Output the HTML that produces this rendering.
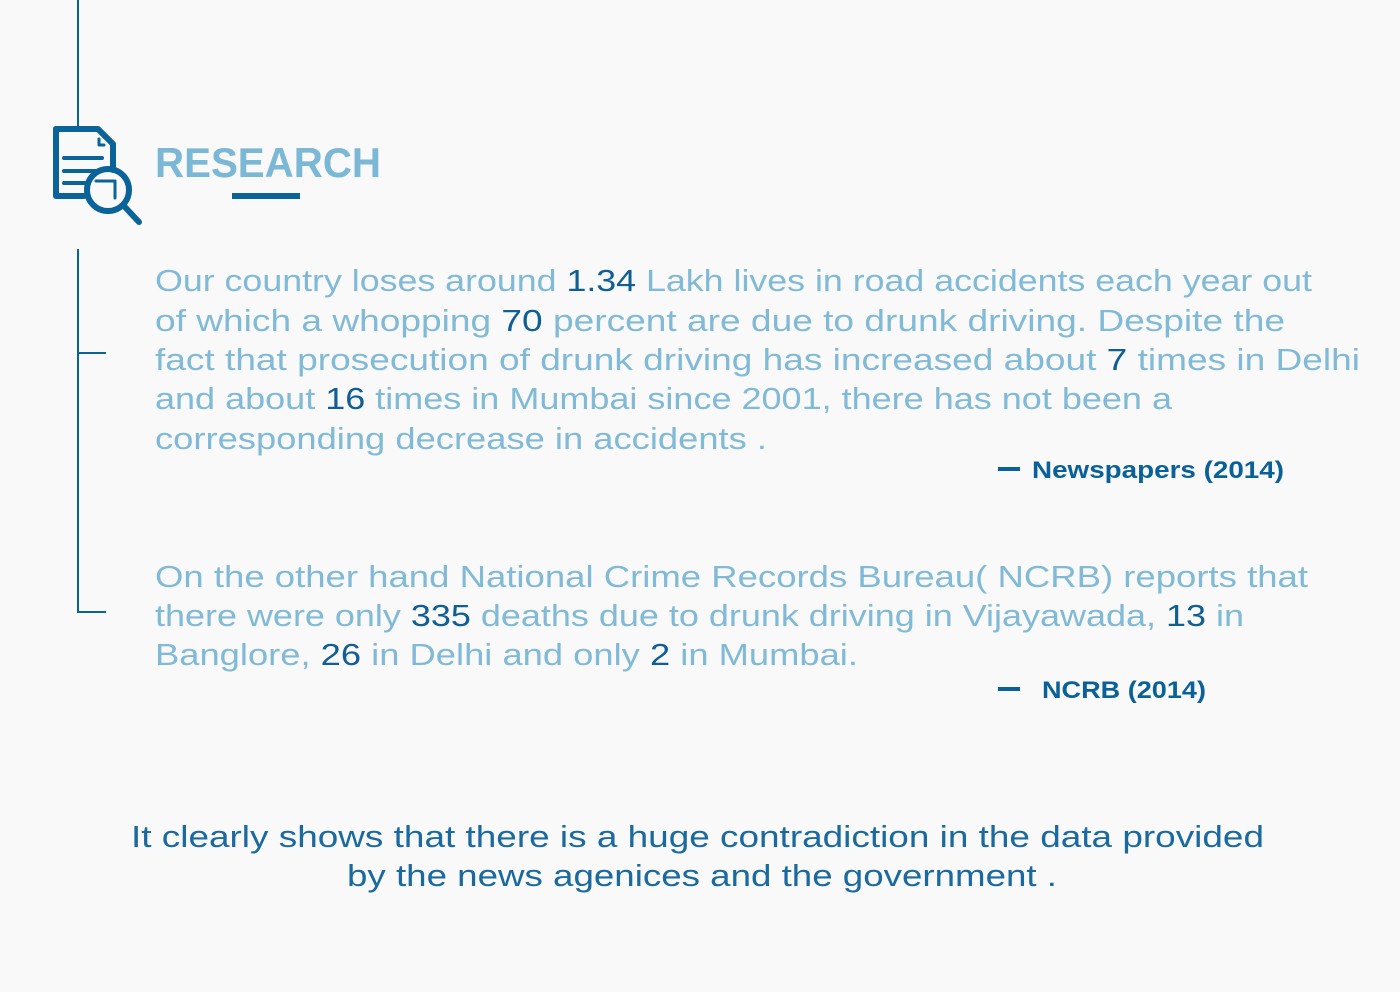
<!DOCTYPE html>
<html><head><meta charset="utf-8"><style>
html,body{margin:0;padding:0;background:#f9f9f9;}
svg{display:block}
text{font-family:"Liberation Sans",sans-serif;}
.l{fill:#80bad7;font-size:31px;}
.n{fill:#0f5f96;}
.b{fill:#1a6aa0;font-size:31px;}
.a{fill:#0a6099;font-size:24px;font-weight:bold;}
</style></head><body>
<svg width="1400" height="992" viewBox="0 0 1400 992" xmlns="http://www.w3.org/2000/svg">
<rect width="1400" height="992" fill="#f9f9f9"/>
<g stroke="#0a6399" stroke-width="2" fill="none">
<line x1="78" y1="0" x2="78" y2="127"/>
<line x1="78" y1="249" x2="78" y2="613"/>
<line x1="78" y1="353" x2="106" y2="353"/>
<line x1="78" y1="612" x2="106" y2="612"/>
</g>
<g fill="none" stroke="#0a6399" stroke-linecap="round" stroke-linejoin="round">
<path d="M56 129 H98 L113 144 V170" stroke-width="6"/>
<path d="M56 129 V196 H84" stroke-width="6"/>
<path d="M99 139 V145 H104" stroke-width="3"/>
<path d="M64 158 H102 M64 171 H96 M64 183 H86" stroke-width="4"/>
<circle cx="108" cy="190" r="21" stroke-width="6"/>
<path d="M124 206 L139 222" stroke-width="6"/>
<path d="M96 181 H115 V198" stroke-width="3"/>
</g>
<text x="155" y="177" font-size="42" font-weight="bold" fill="#7ab8d6" textLength="226" lengthAdjust="spacingAndGlyphs">RESEARCH</text>
<rect x="232" y="193" width="68" height="6" fill="#0a6399"/>

<text class="l" x="155" y="291" textLength="1157" lengthAdjust="spacingAndGlyphs">Our country loses around <tspan class="n">1.34</tspan> Lakh lives in road accidents each year out</text>
<text class="l" x="155" y="331" textLength="1130" lengthAdjust="spacingAndGlyphs">of which a whopping <tspan class="n">70</tspan> percent are due to drunk driving. Despite the</text>
<text class="l" x="155" y="370" textLength="1205" lengthAdjust="spacingAndGlyphs">fact that prosecution of drunk driving has increased about <tspan class="n">7</tspan> times in Delhi</text>
<text class="l" x="155" y="409" textLength="1017" lengthAdjust="spacingAndGlyphs">and about <tspan class="n">16</tspan> times in Mumbai since 2001, there has not been a</text>
<text class="l" x="155" y="449" textLength="612" lengthAdjust="spacingAndGlyphs">corresponding decrease in accidents .</text>

<rect x="998" y="467" width="22" height="4" fill="#0a6099"/>
<text class="a" x="1032" y="478" textLength="252" lengthAdjust="spacingAndGlyphs">Newspapers (2014)</text>

<text class="l" x="155" y="587" textLength="1153" lengthAdjust="spacingAndGlyphs">On the other hand National Crime Records Bureau( NCRB) reports that</text>
<text class="l" x="155" y="626" textLength="1089" lengthAdjust="spacingAndGlyphs">there were only <tspan class="n">335</tspan> deaths due to drunk driving in Vijayawada, <tspan class="n">13</tspan> in</text>
<text class="l" x="155" y="665" textLength="703" lengthAdjust="spacingAndGlyphs">Banglore, <tspan class="n">26</tspan> in Delhi and only <tspan class="n">2</tspan> in Mumbai.</text>

<rect x="998" y="687" width="22" height="4" fill="#0a6099"/>
<text class="a" x="1042" y="698" textLength="164" lengthAdjust="spacingAndGlyphs">NCRB (2014)</text>

<text class="b" x="131" y="847" textLength="1133" lengthAdjust="spacingAndGlyphs">It clearly shows that there is a huge contradiction in the data provided</text>
<text class="b" x="347" y="886" textLength="710" lengthAdjust="spacingAndGlyphs">by the news agenices and the government .</text>
</svg>
</body></html>
